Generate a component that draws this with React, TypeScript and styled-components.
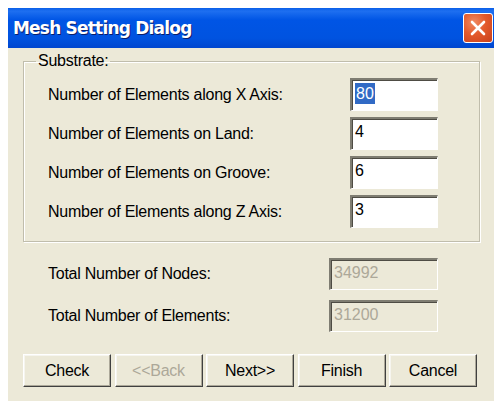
import React from "react";
import styled, { createGlobalStyle } from "styled-components";

const GlobalStyle = createGlobalStyle`
  body {
    margin: 8px 0 0 8px;
    background: #ffffff;
    font-family: "Liberation Sans", Arial, sans-serif;
  }
`;

const SUBSTRATE_ROWS = [
  { label: "Number of Elements along X Axis:", value: "80", selected: true },
  { label: "Number of Elements on Land:", value: "4" },
  { label: "Number of Elements on Groove:", value: "6" },
  { label: "Number of Elements along Z Axis:", value: "3" },
];

const TOTAL_ROWS = [
  { label: "Total Number of Nodes:", value: "34992" },
  { label: "Total Number of Elements:", value: "31200" },
];

const BUTTONS = [
  { text: "Check" },
  { text: "<<Back", disabled: true },
  { text: "Next>>" },
  { text: "Finish" },
  { text: "Cancel" },
];

export default function App() {
  return (
    <>
      <GlobalStyle />
      <Dialog>
        <TitleBar>
          <Title>Mesh Setting Dialog</Title>
          <CloseButton aria-label="Close">
            <svg width="18" height="18" viewBox="0 0 18 18">
              <path
                d="M3 3 L15 15 M15 3 L3 15"
                stroke="#ffffff"
                strokeWidth="2.6"
                strokeLinecap="round"
              />
            </svg>
          </CloseButton>
        </TitleBar>
        <Body>
          <GroupBox>
            <Legend>Substrate:</Legend>
            <FieldGrid $inputWidth={88}>
              {SUBSTRATE_ROWS.map((row) => (
                <React.Fragment key={row.label}>
                  <Label>{row.label}</Label>
                  <Field>
                    {row.selected ? <Selected>{row.value}</Selected> : row.value}
                  </Field>
                </React.Fragment>
              ))}
            </FieldGrid>
          </GroupBox>
          <TotalsGrid $inputWidth={109}>
            {TOTAL_ROWS.map((row) => (
              <React.Fragment key={row.label}>
                <Label>{row.label}</Label>
                <Field $disabled>{row.value}</Field>
              </React.Fragment>
            ))}
          </TotalsGrid>
          <ButtonRow>
            {BUTTONS.map((b) => (
              <Button key={b.text} disabled={b.disabled}>
                {b.text}
              </Button>
            ))}
          </ButtonRow>
        </Body>
      </Dialog>
    </>
  );
}

const Dialog = styled.div`
  width: 486px;
  height: 393px;
  display: flex;
  flex-direction: column;
  background: #ece9d8;
`;

const TitleBar = styled.div`
  height: 40px;
  flex-shrink: 0;
  display: flex;
  align-items: center;
  justify-content: space-between;
  padding: 0 1px 0 5px;
  background: linear-gradient(
    to bottom,
    #0a5fe8 0%,
    #1e6ff0 8%,
    #0055e5 30%,
    #0053e0 75%,
    #0046cf 100%
  );
`;

const Title = styled.span`
  color: #ffffff;
  font-family: "DejaVu Sans", "Liberation Sans", sans-serif;
  font-weight: bold;
  font-size: 17px;
  letter-spacing: -0.8px;
  text-shadow: 1px 1px 0 #0a1e6a;
  margin-top: -1px;
`;

const CloseButton = styled.div`
  width: 30px;
  height: 30px;
  box-sizing: border-box;
  border: 1px solid #ffffff;
  border-radius: 3px;
  background: radial-gradient(circle at 35% 30%, #f08a63 0%, #e35a2c 45%, #c8401c 100%);
  display: flex;
  align-items: center;
  justify-content: center;
`;

const Body = styled.div`
  flex: 1;
  padding: 13px 14px 0 15px;
  display: flex;
  flex-direction: column;
`;

const GroupBox = styled.fieldset`
  margin: -8px 0 0 0;
  padding: 9px 0 13px 24px;
  height: 189px;
  box-sizing: border-box;
  border: 1px solid #c0bdac;
  box-shadow: inset 1px 1px 0 #ffffff, 1px 1px 0 #ffffff;
`;

const Legend = styled.legend`
  margin-left: -12px;
  padding: 0 2px;
  font-size: 16px;
  letter-spacing: -0.25px;
  color: #000000;
  line-height: 16px;
`;

const FieldGrid = styled.div<{ $inputWidth: number }>`
  display: grid;
  grid-template-columns: 1fr ${({ $inputWidth }) => $inputWidth}px;
  grid-auto-rows: 33px;
  row-gap: 6px;
  align-items: center;
  padding-right: 41px;
`;

const TotalsGrid = styled(FieldGrid)`
  margin-top: 16px;
  padding-left: 25px;
  padding-right: 42px;
  grid-auto-rows: 32px;
  row-gap: 10px;
`;

const Label = styled.span`
  font-size: 16px;
  letter-spacing: -0.25px;
  color: #000000;
  white-space: nowrap;
`;

const Field = styled.div<{ $disabled?: boolean }>`
  height: 100%;
  box-sizing: border-box;
  padding: 3px 3px 0 3px;
  font-size: 16px;
  line-height: 20px;
  color: ${({ $disabled }) => ($disabled ? "#aca899" : "#000000")};
  background: ${({ $disabled }) => ($disabled ? "#ece9d8" : "#ffffff")};
  border-style: solid;
  border-width: 2px 1px 1px 2px;
  border-color: #7f7d72 #ffffff #ffffff #7f7d72;
  box-shadow: inset 1px 1px 0 #4e4c44;
`;

const Selected = styled.span`
  display: inline-block;
  background: #316ac5;
  color: #ffffff;
  padding: 0 1px;
  line-height: 21px;
`;

const ButtonRow = styled.div`
  margin-top: 22px;
  display: flex;
  gap: 3.5px;
  width: 454px;
`;

const Button = styled.button`
  flex: 1;
  height: 33px;
  padding: 0;
  font-family: "Liberation Sans", Arial, sans-serif;
  font-size: 16px;
  letter-spacing: -0.25px;
  color: #000000;
  background: #ece9d8;
  border-style: solid;
  border-width: 1px;
  border-color: #ffffff #404040 #404040 #ffffff;
  box-shadow: inset -1px -1px 0 #aca899, inset 1px 1px 0 #f6f5ef;

  &:disabled {
    color: #aca899;
  }
`;
